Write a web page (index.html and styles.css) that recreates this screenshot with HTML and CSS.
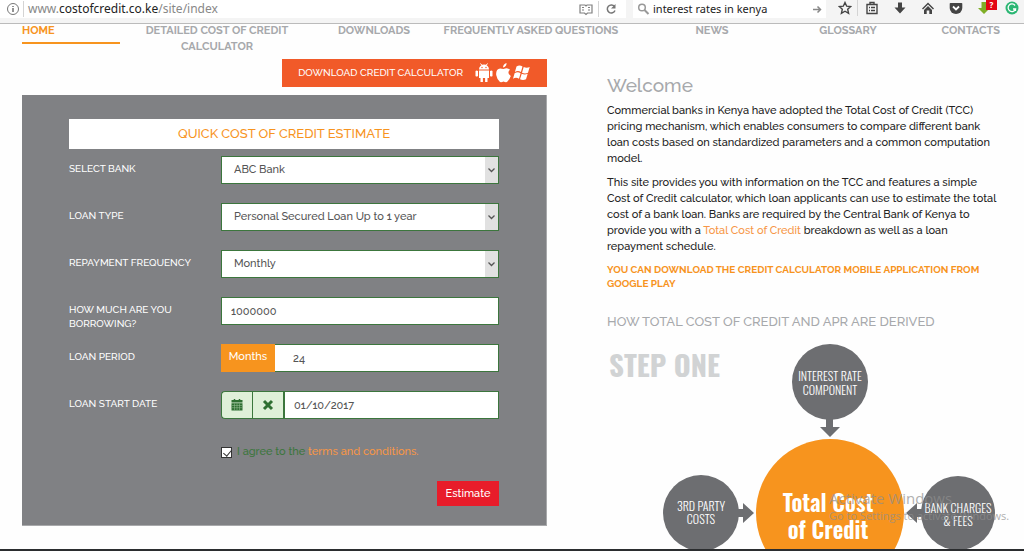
FILE: index.html
```html
<!DOCTYPE html>
<html lang="en">
<head>
<meta charset="utf-8">
<title>Cost of Credit</title>
<link rel="stylesheet" href="styles.css">
</head>
<body>
<header class="toolbar">
  <div class="field address">
    <svg class="icon" viewBox="0 0 14 14"><circle cx="7" cy="7" r="5.500" fill="none" stroke="#777"/><path d="M7 6v4M7 4v1" stroke="#666" stroke-width="1.400"/></svg>
    <span class="divider"></span>
    <span class="url">www.<b>costofcredit.co.ke</b>/site/index</span>
    <button class="tool" aria-label="Reader view"><svg class="icon" viewBox="0 0 14 14"><path d="M1 3h5l1 1 1-1h5v8H8.500L7 12.500 5.500 11H1zM3 5.500h2M3 8h2M9 5.500h2M9 8h2" fill="none" stroke="#808080" stroke-width="1.200"/></svg></button>
    <span class="divider"></span>
    <button class="tool" aria-label="Reload"><svg class="icon" viewBox="0 0 14 14"><path d="M10.500 4.500A4 4 0 1 0 11 8.500" fill="none" stroke="#777" stroke-width="1.500"/><path d="M11.500 2v4.500H7z" fill="#777"/></svg></button>
  </div>
  <div class="field search">
    <svg class="icon" viewBox="0 0 14 14"><circle cx="6" cy="5.500" r="3.300" fill="none" stroke="#999" stroke-width="1.500"/><path d="M8.500 8l4 4" stroke="#999" stroke-width="2"/></svg>
    <input class="search-input" type="text" aria-label="Search" value="interest rates in kenya">
    <svg class="icon" viewBox="0 0 14 14"><path d="M3 7.500h7M7.500 4.500l3 3-3 3" fill="none" stroke="#888" stroke-width="1.500"/></svg>
  </div>
  <div class="tools">
    <button class="tool star" aria-label="Bookmark"><svg class="icon" viewBox="0 0 14 14"><path d="M7 1.500l1.700 3.700 4 .4-3 2.700.9 4L7 10.200l-3.600 2.100.9-4-3-2.700 4-.4z" fill="none" stroke="#444" stroke-width="1.400"/></svg></button>
    <span class="divider"></span>
    <button class="tool" aria-label="Library"><svg class="icon" viewBox="0 0 14 14"><path d="M2 3.500h10v9H2zM5 3.500v-2h4v2M4 6.500h1M6 6.500h4M4 9.500h1M6 9.500h4" fill="none" stroke="#444" stroke-width="1.400"/></svg></button>
    <button class="tool" aria-label="Downloads"><svg class="icon" viewBox="0 0 14 14"><path d="M5 1.500h4v5h3.500L7 12.500 1.500 6.500H5z" fill="#444"/></svg></button>
    <button class="tool" aria-label="Home page"><svg class="icon" viewBox="0 0 14 14"><path d="M7 1.500l6 6-1 1-5-5-5 5-1-1zM7 5l4 4v4H8.300V9.500H5.700V13H3V9z" fill="#444"/></svg></button>
    <button class="tool" aria-label="Pocket"><svg class="icon" viewBox="0 0 14 14"><path d="M1.500 2h11q.8 0 .8.800V7a6.300 6 0 0 1-12.600 0V2.800q0-.8.800-.8z" fill="#444"/><path d="M4 5.500l3 3 3-3" fill="none" stroke="#fff" stroke-width="1.800"/></svg></button>
    <button class="tool" aria-label="Download helper"><svg class="icon" viewBox="0 0 14 14"><path d="M4.500 1h5v6H13l-6 6-6-6h3.500z" fill="#7fae27"/></svg><span class="alert">?</span></button>
    <button class="tool" aria-label="Writing assistant"><svg class="icon" viewBox="0 0 14 14"><circle cx="7" cy="7" r="6.500" fill="#2bb673"/><path d="M10 4.500A3.800 3.800 0 1 0 10.500 8H8M10.500 7.500V10" fill="none" stroke="#fff" stroke-width="1.300"/></svg></button>
  </div>
</header>

<div class="page">
  <nav class="menu">
    <a class="menu-link current" href="#">HOME</a>
    <a class="menu-link wrap" href="#">DETAILED COST OF CREDIT CALCULATOR</a>
    <a class="menu-link" href="#">DOWNLOADS</a>
    <a class="menu-link" href="#">FREQUENTLY ASKED QUESTIONS</a>
    <a class="menu-link" href="#">NEWS</a>
    <a class="menu-link" href="#">GLOSSARY</a>
    <a class="menu-link last" href="#">CONTACTS</a>
  </nav>

  <main class="columns">
    <section class="calculator">
      <a class="download" href="#">DOWNLOAD CREDIT CALCULATOR
        <svg class="platforms" viewBox="0 0 56 20" fill="#fff">
          <path d="M4 6.500a5 5 0 0 1 10 0zM4 7.500h10V15H4zM.5 8q1-1 2.500 0v5q-1.500 1-2.500 0zM15 8q1.500-1 2.500 0v5q-1 1-2.500 0zM5.500 15h2.400v4H5.500zM10.100 15h2.400v4h-2.400z"/>
          <path d="M5.500.500l1.500 2M12.500.500l-1.500 2" stroke="#fff"/>
          <circle cx="7" cy="4.500" r=".7" fill="#f15a29"/><circle cx="11" cy="4.500" r=".7" fill="#f15a29"/>
          <path d="M31.500 0q.3 3.500-3.500 4.500 0-3.500 3.500-4.500zM28.500 6q4-2 6.500.8-3.500 3 .8 6.200-1.500 4-3.800 6-1.500.5-3.500-.5-2 1-3.500.5-3-2.500-3.800-7-.5-6 4-6.500 1.500 0 3.300.5z"/>
          <path d="M41.500 3.500q3-2 6 0l-1.600 5.500q-3-2-6 0zM48.700 4q3 1.600 6 0L53 9.700q-3 1.600-6 0zM39.600 10.200q3-2 6 0L44 15.700q-3-2-6 0zM46.700 10.700q3 1.600 6 0L51 16.300q-3 1.600-6 0z"/>
        </svg>
      </a>
      <form class="panel">
        <h2 class="panel-title">QUICK COST OF CREDIT ESTIMATE</h2>
        <div class="rows">
          <label class="label" for="bank">SELECT BANK</label>
          <div class="picker"><select class="control select" id="bank"><option>ABC Bank</option></select><svg class="chevron" viewBox="0 0 13 26"><path d="M3.500 11.500l3 3 3-3" fill="none" stroke="#555" stroke-width="1.300"/></svg></div>
          <label class="label" for="type">LOAN TYPE</label>
          <div class="picker"><select class="control select" id="type"><option>Personal Secured Loan Up to 1 year</option></select><svg class="chevron" viewBox="0 0 13 26"><path d="M3.500 11.500l3 3 3-3" fill="none" stroke="#555" stroke-width="1.300"/></svg></div>
          <label class="label" for="frequency">REPAYMENT FREQUENCY</label>
          <div class="picker"><select class="control select" id="frequency"><option>Monthly</option></select><svg class="chevron" viewBox="0 0 13 26"><path d="M3.500 11.500l3 3 3-3" fill="none" stroke="#555" stroke-width="1.300"/></svg></div>
          <label class="label" for="amount">HOW MUCH ARE YOU BORROWING?</label>
          <input class="control" id="amount" type="text" value="1000000">
          <label class="label" for="period">LOAN PERIOD</label>
          <div class="group"><span class="unit">Months</span><input class="control period" id="period" type="text" value="24"></div>
          <label class="label" for="start">LOAN START DATE</label>
          <div class="group">
            <button class="addon first" type="button" aria-label="Pick a date"><svg class="glyph" viewBox="0 0 12 12"><path d="M.5 1h11v2.500H.5zM.5 4.200h11V11.500H.5z" fill="#2f6f32"/><path d="M3.500 0v2.500M8.500 0v2.500" stroke="#2f6f32" stroke-width="1.500"/><path d="M1 6.500h10M1 8.700h10M3.500 4.500V11M6 4.500V11M8.500 4.500V11" stroke="#9cc49a" stroke-width=".5"/></svg></button>
            <button class="addon" type="button" aria-label="Clear date"><svg class="glyph" viewBox="0 0 12 12"><path d="M2 2l8 8M10 2l-8 8" stroke="#2f6f32" stroke-width="3"/></svg></button>
            <input class="control date" id="start" type="text" value="01/10/2017">
          </div>
          <div class="agree"><input class="tick" id="agree" type="checkbox" checked><label for="agree">I agree to the <a class="link" href="#">terms and conditions.</a></label></div>
        </div>
        <button class="submit" type="button">Estimate</button>
      </form>
    </section>

    <section class="intro">
      <h1 class="welcome">Welcome</h1>
      <p class="text">Commercial banks in Kenya have adopted the Total Cost of Credit (TCC) pricing mechanism, which enables consumers to compare different bank loan costs based on standardized parameters and a common computation model.</p>
      <p class="text">This site provides you with information on the TCC and features a simple Cost of Credit calculator, which loan applicants can use to estimate the total cost of a bank loan. Banks are required by the Central Bank of Kenya to provide you with a <a class="link" href="#">Total Cost of Credit</a> breakdown as well as a loan repayment schedule.</p>
      <a class="promo" href="#">YOU CAN DOWNLOAD THE CREDIT CALCULATOR MOBILE APPLICATION FROM GOOGLE PLAY</a>
      <h2 class="derived">HOW TOTAL COST OF CREDIT AND APR ARE DERIVED</h2>
      <svg class="diagram" viewBox="0 0 400 250">
        <text class="step" x="2" y="37">STEP ONE</text>
        <g fill="#6d6e71">
          <circle cx="223" cy="42" r="38"/><circle cx="94" cy="173" r="38"/><circle cx="351" cy="173" r="37"/>
          <path d="M219 78h7v9h7l-10 10-10-10h6zM130 169h6v-6l11 10-11 10v-6h-6zM316 169h-6v-6l-11 10 11 10v-6h6z"/>
        </g>
        <circle cx="223" cy="173" r="74" fill="#f7941e"/>
        <g class="node">
          <text x="223" y="41">INTEREST RATE</text><text x="223" y="55">COMPONENT</text>
          <text x="94" y="171">3RD PARTY</text><text x="94" y="184">COSTS</text>
          <text x="351" y="173">BANK CHARGES</text><text x="351" y="186">&amp; FEES</text>
        </g>
        <g class="total"><text x="221" y="172">Total Cost</text><text x="221" y="199">of Credit</text></g>
      </svg>
    </section>
  </main>
</div>
<aside class="watermark"><p class="mark-title">Activate Windows</p><p class="mark-text">Go to Settings to activate Windows.</p></aside>
<footer class="taskbar"></footer>
</body>
</html>
```
FILE: styles.css
```css
* { box-sizing: border-box; }
body { margin: 0; height: 100vh; overflow: hidden; display: flex; flex-direction: column; background: #fefefe; color: #222; font: 500 11px/16px Raleway, Lato, sans-serif; }
h1, h2, p { margin: 0; font-weight: 500; }
a { text-decoration: none; }
button { font: inherit; border: 0; margin: 0; padding: 0; }
input, select { font: inherit; margin: 0; }

.toolbar { flex: none; display: flex; align-items: flex-start; gap: 7px; height: 24px; background: #f4f4f4; border-bottom: 1px solid #bbb; font: 12px/16px "Noto Sans", sans-serif; }
.field { display: flex; align-items: center; height: 18px; background: #fff; }
.address { flex: 1; gap: 3px; padding: 0 6px; }
.search { width: 193px; padding: 0 2px 0 3px; }
.icon { flex: none; width: 14px; height: 14px; display: block; }
.divider { flex: none; width: 1px; height: 16px; background: #d4d4d4; }
.url { flex: 1; color: #888; padding-left: 1px; }
.url b { font-weight: 400; color: #222; }
.search-input { flex: 1; min-width: 0; border: 0; padding: 0 0 0 3px; background: none; color: #222; font-size: 11px; }
.tools { display: flex; align-items: center; height: 16px; margin-right: -2px; }
.tool { position: relative; display: flex; justify-content: center; width: 28px; background: none; }
.address .tool { width: 18px; }
.tool.star { width: 24px; }
.alert { position: absolute; left: 16px; top: -1px; width: 11px; height: 10px; background: #e30613; color: #fff; font: bold 8px/10px "Noto Sans", sans-serif; }

.page { flex: 1; min-height: 0; overflow: hidden; }
.menu { display: grid; grid-template-columns: 98fr 194fr 120fr 194fr 168fr 104fr 100fr; align-items: start; padding: 0 24px 0 22px; height: 35px; font-weight: 700; text-align: center; }
.menu-link { color: #a7a9ac; margin-top: -1px; white-space: nowrap; }
.menu-link.wrap { padding: 0 20px; white-space: normal; }
.menu-link.current { color: #f7941e; text-align: left; padding-bottom: 3px; border-bottom: 2px solid #f7941e; }
.menu-link.last { text-align: right; }

.columns { display: grid; grid-template-columns: 525fr 400fr; column-gap: 60px; padding: 0 17px 0 22px; }
.calculator { display: flex; flex-direction: column; align-items: flex-end; gap: 8px; }
.download { display: flex; align-items: center; gap: 12px; height: 28px; padding: 0 16px; background: #f15a29; color: #fff; font-size: 10px; }
.platforms { width: 56px; height: 20px; }
.panel { width: 100%; display: flex; flex-direction: column; padding: 24px 47px 19px; background: #808184; border: 1px solid #a8a9ab; border-width: 0 1px 1px 0; }
.panel-title { padding: 6px 0; background: #fff; color: #f7941e; font-size: 13px; line-height: 18px; text-align: center; }
.rows { display: grid; grid-template-columns: 152fr 278fr; grid-auto-rows: 47px; align-items: start; padding-top: 7px; }
.label { padding: 6px 16px 0 0; color: #fff; font-size: 10px; line-height: 14px; }
.control { width: 100%; height: 28px; padding: 0 9px; border: 1px solid #3c763d; border-radius: 0; background: #fff; color: #555; }
.picker { position: relative; }
.select { appearance: none; padding: 0 12px; }
.chevron { position: absolute; right: 1px; top: 1px; width: 13px; height: 26px; background: #e1e1e1; pointer-events: none; }
.group { display: flex; height: 28px; }
.group .control { flex: 1; min-width: 0; }
.unit { width: 54px; background: #f7941e; color: #fff; line-height: 26px; text-align: center; }
.group .period { padding-left: 18px; border-left: 0; }
.addon { display: flex; align-items: center; justify-content: center; width: 31px; background: #dff0d8; border: 1px solid #3c763d; border-right: 0; }
.addon.first { border-radius: 4px 0 0 4px; }
.glyph { width: 12px; height: 12px; }
.date { border-left-width: 2px; }
.agree { grid-column: 2; display: flex; align-items: center; gap: 5px; padding-top: 6px; color: #3c763d; }
.tick { appearance: none; width: 11px; height: 11px; border: 1px solid #333; background: #fff; }
.tick:checked::after { content: ""; display: block; width: 4px; height: 7px; margin-left: 3px; border: solid #333; border-width: 0 1px 1px 0; transform: rotate(40deg); }
.link { color: #f79646; }
.submit { align-self: flex-end; width: 62px; height: 25px; margin-top: -4px; background: #e81c2a; color: #fff; }

.intro { padding-top: 16px; }
.welcome { color: #a7a9ac; font-size: 19px; line-height: 20px; margin-bottom: 8px; }
.text { margin-bottom: 8px; padding-right: 8px; }
.promo { display: block; padding-right: 20px; color: #f7941e; font-size: 10px; font-weight: 700; line-height: 14px; }
.derived { margin-top: 21px; color: #a7a9ac; font-size: 13px; line-height: 20px; }
.diagram { display: block; width: 100%; margin-top: 8px; font-family: Oswald, "Roboto Condensed", Roboto, sans-serif; }
.step { font-size: 29px; font-weight: 700; fill: #d1d3d4; }
.node { font-size: 12px; font-weight: 300; fill: #fff; text-anchor: middle; }
.total { font-size: 23px; font-weight: 600; fill: #fff; text-anchor: middle; }

.watermark { position: absolute; right: 4px; bottom: 27px; width: 191px; color: #8f8f8f; opacity: .7; font-family: "Open Sans", sans-serif; white-space: nowrap; }
.mark-title { font-size: 15px; line-height: 20px; }
.mark-text { font-size: 11px; line-height: 16px; }
.taskbar { flex: none; height: 2px; background: #2b2d2f; }
```
